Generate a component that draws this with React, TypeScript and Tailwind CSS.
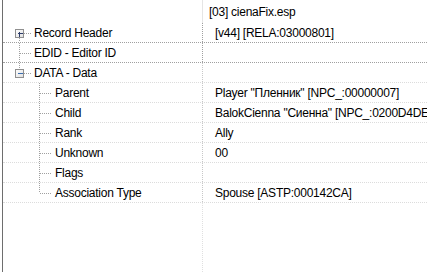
import React from 'react';

type Row = {
  label: string;
  value: string;
  level: 0 | 1;
  box?: 'plus' | 'minus';
  // tree connector pieces for this row
  up?: boolean;
  down?: boolean;
  strong?: boolean;
};

const rows: Row[] = [
  { label: 'Record Header', value: '[v44] [RELA:03000801]', level: 0, box: 'plus', down: true, strong: true },
  { label: 'EDID - Editor ID', value: '', level: 0, up: true, down: true, strong: true },
  { label: 'DATA - Data', value: '', level: 0, box: 'minus', up: true },
  { label: 'Parent', value: 'Player "Пленник" [NPC_:00000007]', level: 1, up: true, down: true },
  { label: 'Child', value: 'BalokCienna "Сиенна" [NPC_:0200D4DE]', level: 1, up: true, down: true },
  { label: 'Rank', value: 'Ally', level: 1, up: true, down: true },
  { label: 'Unknown', value: '00', level: 1, up: true, down: true },
  { label: 'Flags', value: '', level: 1, up: true, down: true },
  { label: 'Association Type', value: 'Spouse [ASTP:000142CA]', level: 1, up: true },
];

function TreeLines({ row }: { row: Row }) {
  const dot = { stroke: '#a0a0a0', strokeWidth: 1, strokeDasharray: '1 1', shapeRendering: 'crispEdges' as const };
  const x = row.level === 0 ? 16.5 : 36.5;
  const hEnd = row.level === 0 ? 29 : 49;
  return (
    <svg width="60" height="19" className="absolute left-0 top-0">
      {row.up && <line x1={x} y1={0} x2={x} y2={row.box ? 6 : 10} {...dot} />}
      {row.down && <line x1={x} y1={row.box ? 15 : 10} x2={x} y2={19} {...dot} />}
      <line x1={row.box ? x + 4 : x} y1={10.5} x2={hEnd} y2={10.5} {...dot} />
      {row.box && (
        <g shapeRendering="crispEdges">
          <defs>
            <linearGradient id="bx" x1="0" y1="0" x2="1" y2="1">
              <stop offset="0" stopColor="#ffffff" />
              <stop offset="1" stopColor="#dedede" />
            </linearGradient>
          </defs>
          <rect x={12.5} y={6.5} width={8} height={8} fill="url(#bx)" stroke="#8f8f8f" />
          <line x1={14.5} y1={10.5} x2={19.5} y2={10.5} stroke={row.box === 'minus' ? '#3b6eb0' : '#2d3d6a'} />
          {row.box === 'plus' && <line x1={16.5} y1={8.5} x2={16.5} y2={13.5} stroke="#2d3d6a" />}
        </g>
      )}
    </svg>
  );
}

export default function App() {
  return (
    <div
      className="w-[427px] h-[272px] overflow-hidden bg-white text-[12px] tracking-[-0.25px] text-black"
      style={{ fontFamily: '"Liberation Sans", Arial, sans-serif' }}
    >
      <div className="ml-[2px] h-full border-l border-[#6e6e6e] flex flex-col">
        {/* header */}
        <div className="flex h-[23px] shrink-0">
          <div className="w-[199px] shrink-0" />
          <div className="flex-1 border-l border-[#e5e5e5] pl-[6px] pt-[5px] leading-[14px] whitespace-nowrap">
            [03] cienaFix.esp
          </div>
        </div>

        {rows.map((row) => (
          <div
            key={row.label}
            className={`flex h-5 shrink-0 border-b border-dotted ${row.strong ? 'border-[#a0a0a0]' : 'border-[#dcdcdc]'}`}
          >
            <div className="relative w-[199px] shrink-0">
              <TreeLines row={row} />
              <div className={`${row.level === 0 ? 'pl-[31px]' : 'pl-[52px]'} pt-[3px] leading-[14px] whitespace-nowrap`}>
                {row.label}
              </div>
            </div>
            <div
              className={`flex-1 border-l border-dotted ${row.strong ? 'border-[#a0a0a0]' : 'border-[#c8c8c8]'} pl-[12px] pt-[3px] leading-[14px] whitespace-nowrap overflow-hidden`}
            >
              {row.value}
            </div>
          </div>
        ))}

        {/* empty remainder */}
        <div className="flex flex-1">
          <div className="w-[199px] shrink-0" />
          <div className="flex-1 border-l border-dotted border-[#e0e0e0]" />
        </div>
      </div>
    </div>
  );
}
